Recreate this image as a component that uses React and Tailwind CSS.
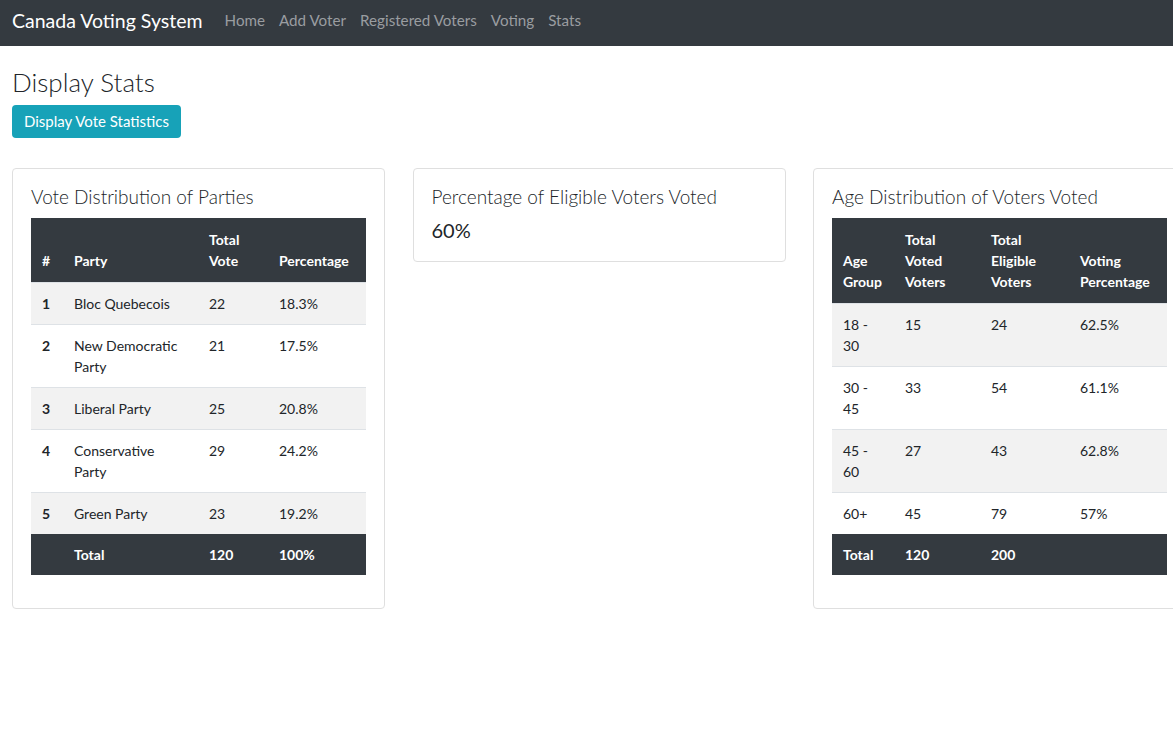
import React from 'react';

const parties = [
  { id: 1, name: 'Bloc Quebecois', votes: 22, pct: '18.3%' },
  { id: 2, name: 'New Democratic Party', votes: 21, pct: '17.5%' },
  { id: 3, name: 'Liberal Party', votes: 25, pct: '20.8%' },
  { id: 4, name: 'Conservative Party', votes: 29, pct: '24.2%' },
  { id: 5, name: 'Green Party', votes: 23, pct: '19.2%' },
];

const ages = [
  { group: '18 - 30', voted: 15, eligible: 24, pct: '62.5%' },
  { group: '30 - 45', voted: 33, eligible: 54, pct: '61.1%' },
  { group: '45 - 60', voted: 27, eligible: 43, pct: '62.8%' },
  { group: '60+', voted: 45, eligible: 79, pct: '57%' },
];

const navLinks = ['Home', 'Add Voter', 'Registered Voters', 'Voting', 'Stats'];

const App = () => {
  return (
    <div className="min-h-screen bg-white text-[#212529] overflow-hidden font-['Lato','Noto_Sans',sans-serif]">
      {/* Navbar */}
      <nav className="h-[46px] bg-[#343a40] flex items-center px-[12px] pb-[5px]">
        <span className="text-white text-[19.5px] mr-[15px]">Canada Voting System</span>
        <div className="flex">
          {navLinks.map((l) => (
            <a key={l} className="text-[15.2px] text-[#9a9da0] px-[7px]">{l}</a>
          ))}
        </div>
      </nav>

      <div className="px-[12px]">
        <h2 className="text-[26px] leading-[1.2] mt-[21px] mb-[7px] font-light">Display Stats</h2>
        <button className="bg-[#17a2b8] text-white text-[15px] h-[33px] px-[12px] rounded-[4px]">
          Display Vote Statistics
        </button>

        <div className="flex items-start gap-[27.5px] mt-[30px]">
          {/* Card 1 */}
          <div className="w-[373px] shrink-0 border border-[#dfdfdf] rounded-[4px] px-[18px] pt-[17px] pb-[33px]">
            <h5 className="text-[19px] leading-[1.2] mb-[9px] font-light">Vote Distribution of Parties</h5>
            <table className="w-full border-collapse text-[14px] leading-[21px]">
              <thead>
                <tr className="bg-[#343a40] text-white font-bold text-left">
                  <th className="w-[32px] px-[11px] py-[11px] align-bottom">#</th>
                  <th className="w-[135px] px-[11px] py-[11px] align-bottom">Party</th>
                  <th className="w-[70px] px-[11px] py-[11px] align-bottom">Total Vote</th>
                  <th className="px-[11px] py-[11px] align-bottom">Percentage</th>
                </tr>
              </thead>
              <tbody>
                {parties.map((p, i) => (
                  <tr key={p.id} className={`border-t border-[#dee2e6] ${i % 2 === 0 ? 'bg-[#f2f2f2]' : 'bg-white'}`}>
                    <td className="px-[11px] py-[10px] align-top font-bold">{p.id}</td>
                    <td className="px-[11px] py-[10px] align-top">{p.name}</td>
                    <td className="px-[11px] py-[10px] align-top">{p.votes}</td>
                    <td className="px-[11px] py-[10px] align-top">{p.pct}</td>
                  </tr>
                ))}
                <tr className="bg-[#343a40] text-white font-bold">
                  <td className="px-[11px] py-[10px]"></td>
                  <td className="px-[11px] py-[10px]">Total</td>
                  <td className="px-[11px] py-[10px]">120</td>
                  <td className="px-[11px] py-[10px]">100%</td>
                </tr>
              </tbody>
            </table>
          </div>

          {/* Card 2 */}
          <div className="w-[373px] shrink-0 border border-[#dfdfdf] rounded-[4px] px-[18px] pt-[17px] pb-[19px]">
            <h5 className="text-[19px] leading-[1.2] mb-[9px] font-light">Percentage of Eligible Voters Voted</h5>
            <p className="text-[20px] leading-[1.2]">60%</p>
          </div>

          {/* Card 3 */}
          <div className="w-[373px] shrink-0 border border-[#dfdfdf] rounded-[4px] px-[18px] pt-[17px] pb-[33px]">
            <h5 className="text-[19px] leading-[1.2] mb-[9px] font-light">Age Distribution of Voters Voted</h5>
            <table className="w-full border-collapse text-[14px] leading-[21px]">
              <thead>
                <tr className="bg-[#343a40] text-white font-bold text-left">
                  <th className="w-[62px] px-[11px] py-[11px] align-bottom">Age Group</th>
                  <th className="w-[86px] px-[11px] py-[11px] align-bottom">Total Voted Voters</th>
                  <th className="w-[89px] px-[11px] py-[11px] align-bottom">Total Eligible Voters</th>
                  <th className="px-[11px] py-[11px] align-bottom">Voting Percentage</th>
                </tr>
              </thead>
              <tbody>
                {ages.map((a, i) => (
                  <tr key={a.group} className={`border-t border-[#dee2e6] ${i % 2 === 0 ? 'bg-[#f2f2f2]' : 'bg-white'}`}>
                    <td className="px-[11px] py-[10px] align-top">{a.group}</td>
                    <td className="px-[11px] py-[10px] align-top">{a.voted}</td>
                    <td className="px-[11px] py-[10px] align-top">{a.eligible}</td>
                    <td className="px-[11px] py-[10px] align-top">{a.pct}</td>
                  </tr>
                ))}
                <tr className="bg-[#343a40] text-white font-bold">
                  <td className="px-[11px] py-[10px]">Total</td>
                  <td className="px-[11px] py-[10px]">120</td>
                  <td className="px-[11px] py-[10px]">200</td>
                  <td className="px-[11px] py-[10px]"></td>
                </tr>
              </tbody>
            </table>
          </div>
        </div>
      </div>
    </div>
  );
};

export default App;
